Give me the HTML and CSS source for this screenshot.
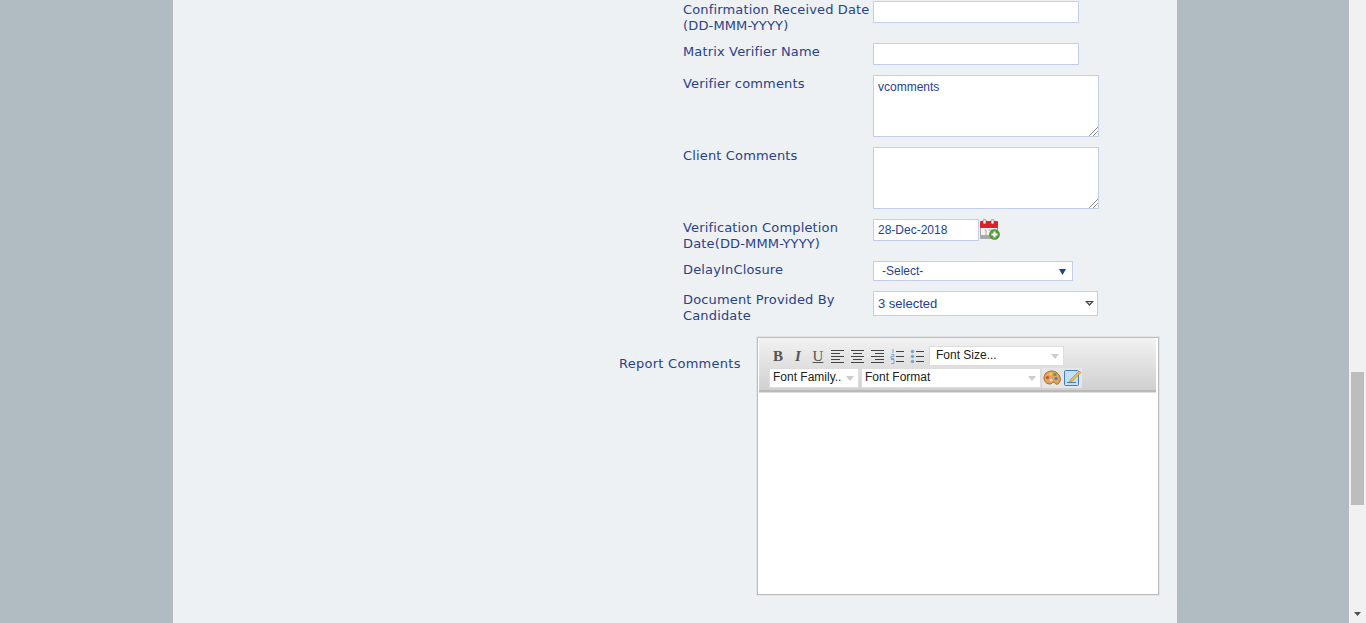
FILE: index.html
```html
<!DOCTYPE html>
<html lang="en">
<head>
<meta charset="utf-8">
<title>Verification form</title>
<link rel="stylesheet" href="styles.css">
</head>
<body>
<div class="viewport">
  <main class="panel">
    <form class="form">
      <div class="row">
        <label class="label">Confirmation Received Date (DD-MMM-YYYY)</label>
        <div class="field"><div class="input wide"></div></div>
      </div>
      <div class="row">
        <label class="label">Matrix Verifier Name</label>
        <div class="field"><div class="input wide"></div></div>
      </div>
      <div class="row">
        <label class="label">Verifier comments</label>
        <div class="field">
          <div class="textarea">vcomments
            <svg class="grip" width="9" height="9" viewBox="0 0 9 9"><path d="M0.5 8.5 8.5 0.5M4.5 8.5 8.5 4.5" stroke="#333" stroke-dasharray="1 .5" fill="none"/></svg>
          </div>
        </div>
      </div>
      <div class="row">
        <label class="label">Client Comments</label>
        <div class="field">
          <div class="textarea">
            <svg class="grip" width="9" height="9" viewBox="0 0 9 9"><path d="M0.5 8.5 8.5 0.5M4.5 8.5 8.5 4.5" stroke="#333" stroke-dasharray="1 .5" fill="none"/></svg>
          </div>
        </div>
      </div>
      <div class="row">
        <label class="label">Verification Completion Date(DD-MMM-YYYY)</label>
        <div class="field date-field">
          <div class="input date">28-Dec-2018</div>
          <svg class="cal" width="21" height="21" viewBox="0 0 21 21">
            <rect x="1.500" y="2.500" width="17" height="17" rx="1" fill="#f4f4f4" stroke="#a5a5a5"/>
            <rect x="1" y="2" width="18" height="7" rx="1" fill="#d8232a"/>
            <rect x="1" y="16" width="18" height="4" fill="#a8a8a8"/>
            <rect x="4" y="0.500" width="3" height="4.500" rx="1" fill="#f5e6e6" stroke="#a33" stroke-width=".5"/>
            <rect x="12" y="0.500" width="3" height="4.500" rx="1" fill="#f5e6e6" stroke="#a33" stroke-width=".5"/>
            <path d="M5.500 11h1.500v5M9.500 11h3.500l-2 5" stroke="#aaa" fill="none"/>
            <circle cx="15.500" cy="15.500" r="5" fill="#5a9e3c" stroke="#3f7f2a" stroke-width=".6"/>
            <path d="M15.500 12.500v6M12.500 15.500h6" stroke="#fff" stroke-width="2"/>
          </svg>
        </div>
      </div>
      <div class="row">
        <label class="label">DelayInClosure</label>
        <div class="field">
          <div class="select-one">
            <span>-Select-</span>
            <svg width="7" height="7" viewBox="0 0 7 7"><path d="M0 1h7L3.500 7z" fill="#1f3f95"/></svg>
          </div>
        </div>
      </div>
      <div class="row">
        <label class="label">Document Provided By Candidate</label>
        <div class="field">
          <div class="select-multi">
            <span>3 selected</span>
            <svg width="9" height="5" viewBox="0 0 9 5"><path d="M0 0h9L4.500 5z" fill="#444"/><path d="M2.500 1h4L4.500 3z" fill="#ddd"/></svg>
          </div>
        </div>
      </div>
      <div class="row editor-row">
        <label class="editor-label">Report Comments</label>
        <div class="editor">
          <div class="toolbar">
            <div class="tool-line">
              <div class="tools">
                <span class="tool fmt bold">B</span>
                <span class="tool fmt italic">I</span>
                <span class="tool fmt under">U</span>
                <svg class="tool" width="16" height="16" viewBox="0 0 16 16"><path d="M1 2.500h13M1 5.500h9M1 8.500h13M1 11.500h9M1 14.500h13" stroke="#444"/></svg>
                <svg class="tool" width="16" height="16" viewBox="0 0 16 16"><path d="M1 2.500h13M3 5.500h9M1 8.500h13M3 11.500h9M1 14.500h13" stroke="#444"/></svg>
                <svg class="tool" width="16" height="16" viewBox="0 0 16 16"><path d="M1 2.500h13M5 5.500h9M1 8.500h13M5 11.500h9M1 14.500h13" stroke="#444"/></svg>
                <svg class="tool" width="16" height="16" viewBox="0 0 16 16"><path d="M6 3.500h8M6 8.500h8M6 13.500h8" stroke="#444"/><path d="M3 1v4M1 6.500h3v2H1v2h3M1 11.500h3v4H1" stroke="#7aa5dc" fill="none"/></svg>
                <svg class="tool" width="16" height="16" viewBox="0 0 16 16"><path d="M6 3.500h8M6 8.500h8M6 13.500h8" stroke="#444"/><circle cx="2.500" cy="3.500" r="1.800" fill="#7aa5dc"/><circle cx="2.500" cy="8.500" r="1.800" fill="#7aa5dc"/><circle cx="2.500" cy="13.500" r="1.800" fill="#7aa5dc"/></svg>
              </div>
              <div class="combo size"><span>Font Size...</span><i class="caret"></i></div>
            </div>
            <div class="tool-line second">
              <div class="combo family"><span>Font Family..</span><i class="caret"></i></div>
              <div class="combo format"><span>Font Format</span><i class="caret"></i></div>
              <div class="icon-pair">
                <svg width="18" height="18" viewBox="0 0 18 18"><path d="M9 2C4 2 1 5 1 9c0 4 3 6 6 6 2 0 2-2 4-2 1 1 2 3 4 2 2-1 3-5 2-7-1-3-4-6-8-6z" fill="#e0a45c" stroke="#a06d2e"/><circle cx="4.500" cy="8.500" r="1.600" fill="#d8453f"/><circle cx="7.500" cy="5" r="1.600" fill="#e8d23c"/><circle cx="12" cy="5.500" r="1.600" fill="#4aa05a"/><circle cx="13" cy="9.500" r="1.600" fill="#4a7fc8"/><circle cx="8" cy="11" r="1.500" fill="#f0d9b5"/></svg>
                <svg width="18" height="18" viewBox="0 0 18 18"><rect x="0.500" y="1.500" width="14" height="15" rx="1" fill="#c6def5" stroke="#3f7fc6"/><path d="M3 13.500h9" stroke="#3f7fc6"/><path d="M6 11 15 2l2 1.500-8.500 8.500-3 1z" fill="#e3c04c" stroke="#a8862a" stroke-width=".6"/></svg>
              </div>
            </div>
          </div>
          <div class="editor-body"></div>
        </div>
      </div>
    </form>
  </main>
  <aside class="scrollbar">
    <div class="thumb"></div>
    <svg class="arrow" width="7" height="4" viewBox="0 0 7 4"><path d="M0 0h7L3.500 4z" fill="#505050"/></svg>
  </aside>
</div>
</body>
</html>
```
FILE: styles.css
```css
* { box-sizing: border-box; }
html, body { margin: 0; height: 623px; overflow: hidden; }
body { background: #b0bcc2; }
.viewport { display: flex; height: 623px; }
.panel { width: 1004px; height: 623px; margin-left: 173px; margin-right: 172px; background: #edf1f4; overflow: hidden; }
.form { display: flex; flex-direction: column; gap: 10px; padding: 1px 0 0 510px; }
.row { display: flex; align-items: flex-start; }
.label { width: 190px; padding-top: 1px; margin-bottom: -1px; font: 13px/16px "DejaVu Sans", Verdana, sans-serif; letter-spacing: .15px; color: #2a4288; }
.field { font: 12px "Liberation Sans", Arial, sans-serif; color: #24409a; }
.input { height: 22px; background: #fff; border: 1px solid #c3cee6; line-height: 20px; padding-left: 3px; }
.wide { width: 206px; }
.date { width: 106px; padding-left: 4px; }
.date-field { display: flex; }
.cal { display: block; }
.textarea { position: relative; width: 226px; height: 62px; background: #fff; border: 1px solid #c3cee6; padding: 4px; line-height: 14px; }
.grip { position: absolute; right: 0; bottom: 0; }
.select-one { display: flex; align-items: center; justify-content: space-between; width: 200px; height: 20px; background: #fff; border: 1px solid #c3cee6; padding: 0 6px 0 8px; }
.select-multi { display: flex; align-items: center; justify-content: space-between; width: 225px; height: 25px; background: #fff; border: 1px solid #c3cee6; padding: 0 3px 0 4px; font-size: 13px; }
.editor-row { margin-top: 4px; margin-left: -64px; }
.editor-label { width: 138px; padding-top: 19px; font: 13px/16px "DejaVu Sans", Verdana, sans-serif; letter-spacing: .27px; color: #2a4288; }
.editor { width: 402px; height: 258px; padding: 0 2px 0 1px; background: #fff; border: 1px solid #bdbdbd; box-shadow: 0 0 0 1px #e2e5e8; }
.toolbar { height: 54px; background: linear-gradient(#f2f2f2, #d0d0d0); border-bottom: 2px solid #b9b9b9; padding: 8px 0 0 10px; }
.tool-line { display: flex; align-items: center; height: 20px; }
.second { margin-top: 2px; gap: 2px; }
.tools { display: flex; align-items: center; gap: 4px; margin: 0 3px 0 1px; }
.tool { display: block; width: 16px; height: 16px; }
.fmt { font: bold 15px/16px "Liberation Serif", serif; color: #555; text-align: center; }
.italic { font-style: italic; }
.under { text-decoration: underline; font-weight: normal; }
.combo { position: relative; height: 20px; background: #fff; border: 1px solid #ddd; font: 12px/16px "Liberation Sans", Arial, sans-serif; color: #222; padding-left: 3px; }
.size { width: 135px; padding-left: 6px; }
.family { width: 90px; }
.format { width: 180px; }
.caret { position: absolute; right: 4px; top: 7px; width: 0; height: 0; border: 4px solid transparent; border-top: 5px solid #ccc; border-bottom: 0; }
.icon-pair { display: flex; gap: 3px; align-items: center; width: 40px; height: 20px; background: #e6e6e6; padding-left: 1px; margin-left: -1px; }
.editor-body { height: 200px; background: #fff; border-top: 1px solid #ddd; }
.scrollbar { position: relative; width: 17px; height: 623px; background: #f1f1f1; }
.thumb { width: 13px; height: 133px; margin: 372px 0 0 2px; background: #bdbdbd; }
.arrow { position: absolute; left: 5px; bottom: 7px; }
```
